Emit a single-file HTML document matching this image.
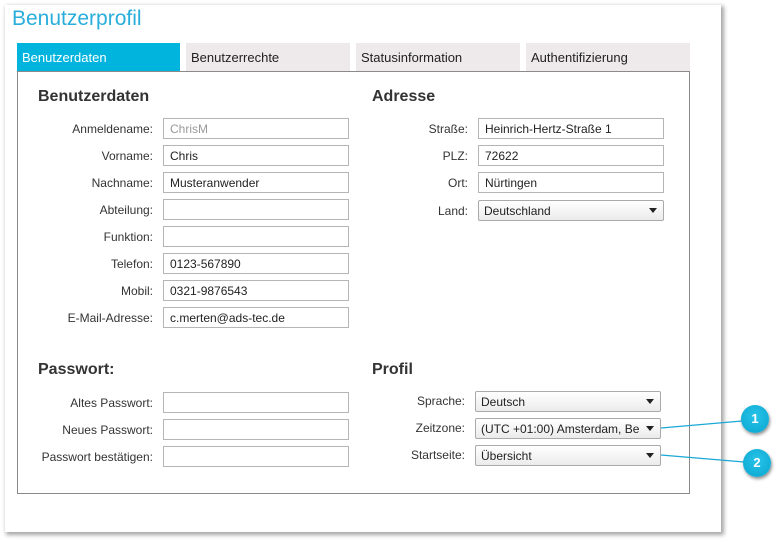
<!DOCTYPE html>
<html><head><meta charset="utf-8"><style>
body{margin:0;width:781px;height:542px;background:#fff;font-family:"Liberation Sans",sans-serif;position:relative;overflow:hidden}
.a{position:absolute}
.panel{left:5px;top:5px;width:716px;height:527px;background:#fff;box-shadow:2px 2px 4px 1px rgba(0,0,0,.35)}
.title{left:12px;top:7px;font-size:21px;color:#29aedb}
.tab{top:43px;height:28px;background:#eeeaec;font-size:13px;line-height:29px;padding-left:5px;color:#222;box-sizing:border-box}
.box{left:17px;top:71px;width:673px;height:423px;border:1px solid #8a8a8a;box-sizing:border-box}
.h{font-size:16px;font-weight:bold;color:#333}
.l{font-size:12px;color:#333;text-align:right;width:150px}
.i{height:21px;border:1px solid #b5b5b5;box-sizing:border-box;font-size:12px;line-height:21px;padding-left:6px;color:#222;background:#fff}
.s{height:21px;border:1px solid #aaa;border-radius:2px;box-sizing:border-box;font-size:12px;line-height:21px;padding-left:5px;color:#222;background:linear-gradient(#fff,#ecebeb)}
.s:after{content:"";position:absolute;right:6px;top:7px;border-left:4px solid transparent;border-right:4px solid transparent;border-top:5px solid #222}
.c{width:28px;height:28px;border-radius:50%;background:radial-gradient(circle at 50% 40%,#28c3e8,#0aa5cf);color:#fff;font-weight:bold;font-size:13px;text-align:center;line-height:28px;box-shadow:1px 2px 3px rgba(0,0,0,.45)}
</style></head><body>
<div class="a panel"></div>
<div class="a title">Benutzerprofil</div>
<div class="a tab" style="left:17px;width:163px;background:#00b4de;color:#fff">Benutzerdaten</div>
<div class="a tab" style="left:186px;width:164px">Benutzerrechte</div>
<div class="a tab" style="left:356px;width:164px">Statusinformation</div>
<div class="a tab" style="left:526px;width:164px">Authentifizierung</div>
<div class="a box"></div>
<div class="a h" style="left:38px;top:88px">Benutzerdaten</div>
<div class="a h" style="left:372px;top:88px">Adresse</div>
<div class="a h" style="left:38px;top:361px">Passwort:</div>
<div class="a h" style="left:372px;top:361px">Profil</div>

<div class="a l" style="left:3px;top:122px">Anmeldename:</div><div class="a i" style="left:163px;top:118px;width:186px;color:#999">ChrisM</div>
<div class="a l" style="left:3px;top:149px">Vorname:</div><div class="a i" style="left:163px;top:145px;width:186px">Chris</div>
<div class="a l" style="left:3px;top:176px">Nachname:</div><div class="a i" style="left:163px;top:172px;width:186px">Musteranwender</div>
<div class="a l" style="left:3px;top:203px">Abteilung:</div><div class="a i" style="left:163px;top:199px;width:186px"></div>
<div class="a l" style="left:3px;top:230px">Funktion:</div><div class="a i" style="left:163px;top:226px;width:186px"></div>
<div class="a l" style="left:3px;top:257px">Telefon:</div><div class="a i" style="left:163px;top:253px;width:186px">0123-567890</div>
<div class="a l" style="left:3px;top:284px">Mobil:</div><div class="a i" style="left:163px;top:280px;width:186px">0321-9876543</div>
<div class="a l" style="left:3px;top:311px">E-Mail-Adresse:</div><div class="a i" style="left:163px;top:307px;width:186px">c.merten@ads-tec.de</div>

<div class="a l" style="left:318px;top:122px">Straße:</div><div class="a i" style="left:478px;top:118px;width:186px">Heinrich-Hertz-Straße 1</div>
<div class="a l" style="left:318px;top:149px">PLZ:</div><div class="a i" style="left:478px;top:145px;width:186px">72622</div>
<div class="a l" style="left:318px;top:176px">Ort:</div><div class="a i" style="left:478px;top:172px;width:186px">Nürtingen</div>
<div class="a l" style="left:318px;top:204px">Land:</div><div class="a s" style="left:478px;top:200px;width:186px">Deutschland</div>

<div class="a l" style="left:3px;top:396px">Altes Passwort:</div><div class="a i" style="left:163px;top:392px;width:186px"></div>
<div class="a l" style="left:3px;top:423px">Neues Passwort:</div><div class="a i" style="left:163px;top:419px;width:186px"></div>
<div class="a l" style="left:3px;top:450px">Passwort bestätigen:</div><div class="a i" style="left:163px;top:446px;width:186px"></div>

<div class="a l" style="left:315px;top:394px">Sprache:</div><div class="a s" style="left:475px;top:391px;width:186px">Deutsch</div>
<div class="a l" style="left:315px;top:421px">Zeitzone:</div><div class="a s" style="left:475px;top:418px;width:186px">(UTC +01:00) Amsterdam, Be</div>
<div class="a l" style="left:315px;top:448px">Startseite:</div><div class="a s" style="left:475px;top:445px;width:186px">Übersicht</div>

<svg class="a" style="left:0;top:0" width="781" height="542"><line x1="661" y1="428" x2="742" y2="421" stroke="#1aa8d6" stroke-width="1.2"/><line x1="661" y1="455" x2="744" y2="462" stroke="#1aa8d6" stroke-width="1.2"/></svg>
<div class="a c" style="left:741px;top:405px">1</div>
<div class="a c" style="left:743px;top:449px">2</div>
</body></html>
